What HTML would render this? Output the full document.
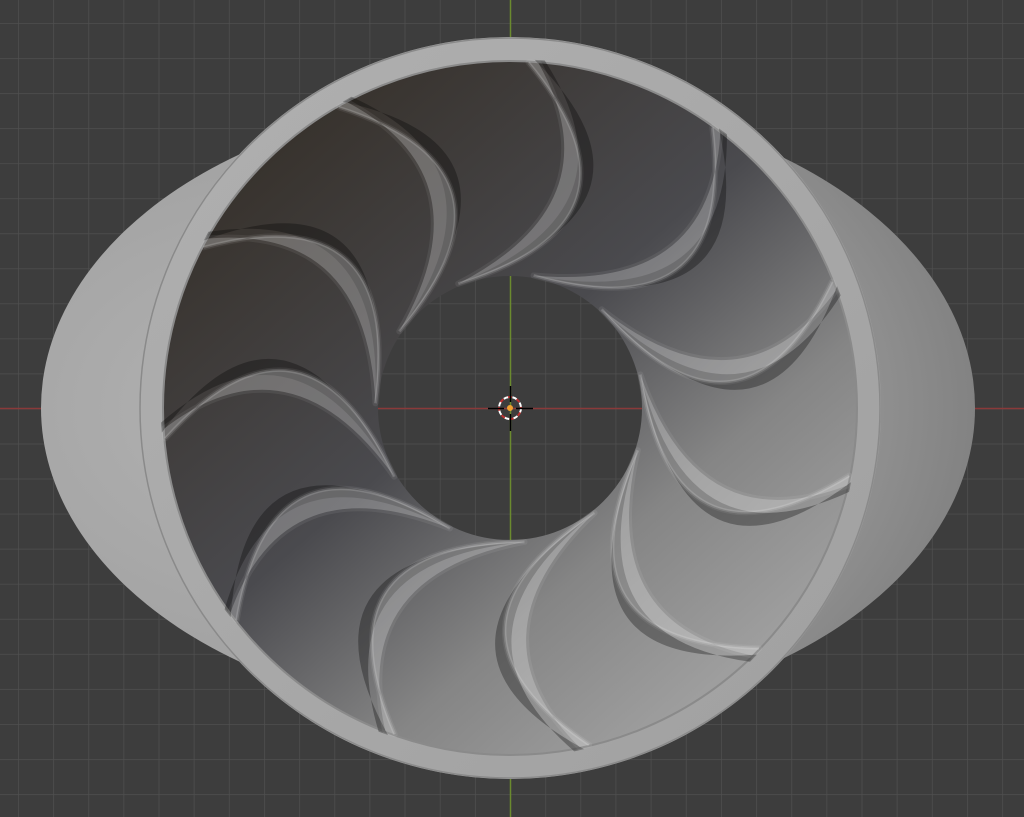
<!DOCTYPE html>
<html><head><meta charset="utf-8"><style>
html,body{margin:0;padding:0;background:#3d3d3d;overflow:hidden}
svg{display:block}
</style></head><body>
<svg width="1024" height="817" viewBox="0 0 1024 817" xmlns="http://www.w3.org/2000/svg">
<defs>
<pattern id="grid" x="18" y="23" width="35.15" height="35.05" patternUnits="userSpaceOnUse">
<rect width="35.15" height="35.05" fill="#3d3d3d"/>
<path d="M0 0H35.15M0 0V35.05" stroke="#4f4f4f" stroke-width="1.5" fill="none"/>
</pattern>
<radialGradient id="back" cx="0.3" cy="0.5" r="0.75">
<stop offset="0" stop-color="#b4b4b4"/><stop offset="0.6" stop-color="#a2a2a2"/><stop offset="1" stop-color="#7c7c7c"/>
</radialGradient>
<linearGradient id="inner" x1="0.2" y1="0.1" x2="0.85" y2="0.85">
<stop offset="0" stop-color="#38332e"/><stop offset="0.45" stop-color="#4a4a4e"/><stop offset="0.75" stop-color="#858585"/><stop offset="1" stop-color="#9e9e9e"/>
</linearGradient>
<linearGradient id="rim" x1="0" y1="0" x2="1" y2="1">
<stop offset="0" stop-color="#b0b0b0"/><stop offset="1" stop-color="#a0a0a0"/>
</linearGradient>
<g id="blade">
<path d="M346,-2 Q 210,152 121,-59 Q 205,112 346,8 Z" fill="#000" opacity="0.3" transform="translate(3,6)"/>
<path d="M346,-2 Q 195,139 121,-59 Q 212,94 346,8 Z" fill="#fff" opacity="0.26" stroke="#fff" stroke-opacity="0.26" stroke-width="6" stroke-linejoin="round"/>
<path d="M346,-2 Q 195,139 121,-59" fill="none" stroke="#fff" stroke-opacity="0.15" stroke-width="3"/>
</g>
</defs>
<rect width="1024" height="817" fill="url(#grid)"/>
<line x1="0" y1="408.5" x2="1024" y2="408.5" stroke="#8a3a3a" stroke-width="1.5"/>
<line x1="510.5" y1="0" x2="510.5" y2="817" stroke="#6b8a2e" stroke-width="1.5"/>
<ellipse cx="508" cy="408" rx="467" ry="310" fill="url(#back)"/>
<circle cx="510" cy="408" r="371" fill="url(#rim)"/>
<circle cx="510" cy="408" r="370" fill="none" stroke="#8a8a8a" stroke-width="1.5"/>
<circle cx="510" cy="408" r="347" fill="url(#inner)" stroke="#8a8a8a" stroke-width="2"/>
<circle cx="510" cy="408" r="132" fill="url(#grid)"/>
<line x1="378" y1="408.5" x2="642" y2="408.5" stroke="#8a3a3a" stroke-width="1.5"/>
<line x1="510.5" y1="276" x2="510.5" y2="540" stroke="#6b8a2e" stroke-width="1.5"/>
<g transform="translate(510,408)">
<use href="#blade" transform="rotate(-86.6)"/>
<use href="#blade" transform="rotate(-53.9)"/>
<use href="#blade" transform="rotate(-21.1)"/>
<use href="#blade" transform="rotate(11.6)"/>
<use href="#blade" transform="rotate(44.3)"/>
<use href="#blade" transform="rotate(77.1)"/>
<use href="#blade" transform="rotate(109.8)"/>
<use href="#blade" transform="rotate(142.5)"/>
<use href="#blade" transform="rotate(175.3)"/>
<use href="#blade" transform="rotate(208)"/>
<use href="#blade" transform="rotate(240.7)"/>
</g>
<circle cx="510" cy="408" r="11" fill="none" stroke="#fff" stroke-width="2" stroke-dasharray="5 4"/>
<circle cx="510" cy="408" r="11" fill="none" stroke="#c03030" stroke-width="2" stroke-dasharray="4 5" stroke-dashoffset="4.5"/>
<path d="M488 408.5H504M516 408.5H533M510.5 386V402M510.5 414V431" stroke="#000" stroke-width="1.5"/>
<circle cx="510" cy="408" r="3" fill="#f0a030"/>
</svg>
</body></html>
